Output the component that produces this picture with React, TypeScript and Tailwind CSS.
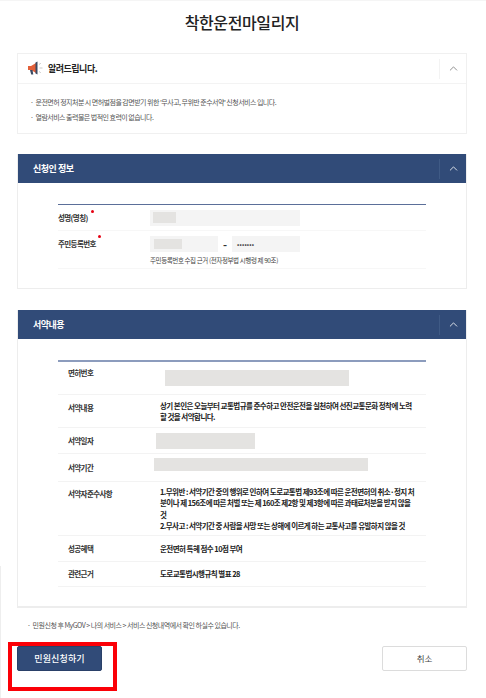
import { ChevronUp } from "lucide-react";

const font = { fontFamily: '"Noto Sans CJK KR", "Noto Sans", sans-serif' };

function Chevron({ white }: { white?: boolean }) {
  return (
    <div className={`flex w-[27px] h-[20px] items-center justify-center border-l ${white ? "border-[#3f5a85]" : "border-[#f3f3f3]"}`}>
      <ChevronUp size={13} strokeWidth={1.5} className={white ? "text-white" : "text-[#777]"} />
    </div>
  );
}

function SectionHeader({ title }: { title: string }) {
  return (
    <div className="flex h-[29px] items-center justify-between bg-[#314b78] pl-[15px]">
      <span className="text-[9px] font-bold text-white tracking-[-0.5px]">{title}</span>
      <Chevron white />
    </div>
  );
}

function Row({ label, labelClass, children, className }: { label: string; labelClass?: string; children: React.ReactNode; className: string }) {
  return (
    <div className={`flex border-b border-[#f3f3f3] ${className}`}>
      <div className={`w-[102px] shrink-0 pl-[10px] text-[7.5px] leading-[12px] font-bold text-[#333] tracking-[-0.6px] ${labelClass ?? ""}`}>{label}</div>
      {children}
    </div>
  );
}

function Value({ children }: { children: React.ReactNode }) {
  return <div className="whitespace-nowrap text-[7.5px] leading-[11.2px] font-bold text-[#222] tracking-[-0.55px]">{children}</div>;
}

export default function App() {
  return (
    <div style={font} className="relative h-[698px] w-[486px] overflow-hidden border-t border-[#f5f5f5] bg-white pl-[17px] pr-[19px]">
      <h1 className="pt-[9px] text-center text-[16px] leading-[24px] font-medium text-[#222] tracking-[-0.4px]">착한운전마일리지</h1>

      {/* notice */}
      <section className="mt-[19px] h-[81px] border border-[#f0f0f0]">
        <div className="flex h-[30px] items-center justify-between border-b border-[#f3f3f3] pl-[9px]">
          <div className="flex items-center gap-[4px]">
            <svg width="17" height="15" viewBox="0 0 17 15">
              <path d="M1 5h3l5-3v10L4 9H1z" fill="#e2603a" />
              <path d="M3 9h2.5l.8 4.5H4.2z" fill="#3b4a63" />
              <path d="M8.5 1.5l2-1v13l-2-1z" fill="#3b4a63" />
              <path d="M12.5 7h3M12 3.5l1.8-1.2M12 10.5l1.8 1.2" stroke="#bbb" strokeWidth=".8" />
            </svg>
            <span className="text-[9px] font-bold text-[#222] tracking-[-0.5px]">알려드립니다.</span>
          </div>
          <Chevron />
        </div>
        <ul className="pt-[11px] pl-[12px] text-[7px] leading-[15px] text-[#555] tracking-[-0.53px]">
          <li>·&nbsp; 운전면허 정지처분 시 면허벌점을 감면받기 위한 '무사고, 무위반 준수서약' 신청서비스 입니다.</li>
          <li>·&nbsp; 열람서비스 출력물은 법적인 효력이 없습니다.</li>
        </ul>
      </section>

      {/* applicant */}
      <section className="mt-[20px] h-[135px] border-b border-x border-[#ededed]">
        <SectionHeader title="신청인 정보" />
        <div className="mx-[40px] mt-[21px] border-t border-[#5b6f99]">
          <div className="flex h-[26px] items-center border-b border-[#f7f7f7]">
            <div className="relative w-[92px] text-[7.5px] font-bold text-[#333] tracking-[-0.6px]">
              성명(명칭)
              <span className="absolute left-[33px] -top-[2px] h-[3px] w-[3px] rounded-full bg-[#e60012]" />
            </div>
            <div className="flex h-[16px] w-[150px] items-center bg-[#f4f4f4] pl-[3px]">
              <div className="h-[11px] w-[23px] bg-[#e4e3e1]" />
            </div>
          </div>
          <div className="flex h-[38px] border-b border-[#f7f7f7] pt-[5px]">
            <div className="relative w-[92px] pt-[2px] text-[7.5px] font-bold text-[#333] tracking-[-0.6px]">
              주민등록번호
              <span className="absolute left-[40px] -top-[1px] h-[3px] w-[3px] rounded-full bg-[#e60012]" />
            </div>
            <div>
              <div className="flex items-center">
                <div className="flex h-[16px] w-[68px] items-center bg-[#f4f4f4] pl-[4px]">
                  <div className="h-[10px] w-[28px] bg-[#e4e3e1]" />
                </div>
                <span className="w-[14px] text-center text-[11px] font-bold text-[#333]">-</span>
                <div className="flex h-[16px] w-[68px] items-center bg-[#f4f4f4] pl-[5px] text-[6px] font-bold text-[#333] tracking-[0.2px]">•••••••</div>
              </div>
              <p className="mt-[1px] text-[6.5px] leading-[12px] text-[#444] tracking-[-0.4px]">주민등록번호 수집 근거 (전자정부법 시행령 제 90조)</p>
            </div>
          </div>
        </div>
      </section>

      {/* pledge */}
      <section className="mt-[21px] h-[298px] border-b-2 border-x border-[#ededed]">
        <SectionHeader title="서약내용" />
        <div className="mx-[40px] mt-[21px] border-t-2 border-[#8c9cbd]">
          <Row label="면허번호" labelClass="pt-[5px]" className="h-[33px]">
            <div className="mt-[8px] ml-[5px] h-[16px] w-[184px] bg-[#e4e3e1]" />
          </Row>
          <Row label="서약내용" labelClass="pt-[7px]" className="h-[33px]">
            <div className="self-center">
              <Value>상기 본인은 오늘부터 교통법규를 준수하고 안전운전을 실천하여 선진교통문화 정착에 노력<br />할 것을 서약합니다.</Value>
            </div>
          </Row>
          <Row label="서약일자" className="h-[26px] items-center">
            <div className="-ml-[4px] h-[16px] w-[99px] bg-[#e4e3e1]" />
          </Row>
          <Row label="서약기간" className="h-[28px] items-center">
            <div className="-ml-[6px] -mt-[6px] h-[13px] w-[214px] bg-[#e4e3e1]" />
          </Row>
          <Row label="서약자준수사항" labelClass="pt-[6px]" className="h-[54px]">
            <div className="self-center">
              <Value>
                1.무위반 : 서약기간 중의 행위로 인하여 도로교통법 제93조에 따른 운전면허의 취소·정지 처<br />
                분이나 제 156조에 따른 처벌 또는 제 160조 제2항 및 제3항에 따른 과태료처분을 받지 않을<br />
                것<br />
                2.무사고 : 서약기간 중 사람을 사망 또는 상해에 이르게 하는 교통사고를 유발하지 않을 것
              </Value>
            </div>
          </Row>
          <Row label="성공혜택" className="h-[26px] items-center">
            <Value>운전면허 특혜 점수 10점 부여</Value>
          </Row>
          <Row label="관련근거" className="h-[25px] items-center">
            <Value>도로교통법시행규칙 별표 28</Value>
          </Row>
        </div>
      </section>

      <p className="mt-[11px] pl-[10px] text-[7px] leading-[12px] text-[#555] tracking-[-0.5px]">·&nbsp; 민원신청 후 MyGOV &gt; 나의 서비스 &gt; 서비스 신청내역에서 확인 하실수 있습니다.</p>

      <div className="mt-[15px] flex items-center justify-between">
        <button className="h-[25px] w-[85px] rounded-[2px] border border-[#2a4068] bg-[#314b78] text-[9px] font-medium text-white tracking-[0.1px]">민원신청하기</button>
        <button className="h-[25px] w-[85px] rounded-[2px] border border-[#dcdcdc] bg-white text-[8.5px] text-[#444]">취소</button>
      </div>

      {/* red annotation around the submit button */}
      <div className="absolute left-[8px] top-[641px] h-[49px] w-[109px] border-4 border-[#fb0007]" />
      <div className="absolute bottom-0 left-0 h-[132px] w-[1px] bg-[#eeeeee]" />
    </div>
  );
}
